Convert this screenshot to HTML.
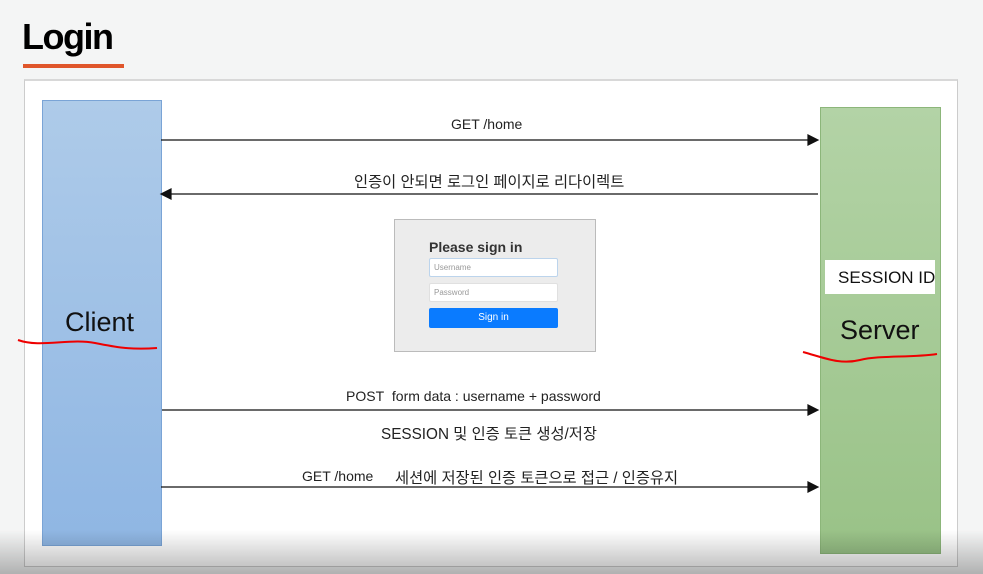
<!DOCTYPE html>
<html><head><meta charset="utf-8"><style>
body{margin:0;width:983px;height:574px;background:#f4f5f5;position:relative;overflow:hidden;font-family:"Liberation Sans","Noto Sans CJK KR",sans-serif}
.a{position:absolute}
.t{font-size:14px;color:#222;white-space:nowrap}
.k{font-size:15.3px}
</style></head><body>
<div class="a" style="left:22px;top:16px;font-size:36px;font-weight:bold;color:#000;letter-spacing:-1.5px">Login</div>
<div class="a" style="left:23px;top:64px;width:101px;height:4px;background:#e0562b"></div>
<div class="a" style="left:24px;top:79px;width:932px;height:485px;background:#fff;border:1px solid #ccc;border-top:2px solid #d8d8d8"></div>
<div class="a" style="left:42px;top:100px;width:118px;height:444px;background:linear-gradient(#aecbe9,#8fb6e3);border:1px solid #7aa4d6"></div>
<div class="a" style="left:820px;top:107px;width:119px;height:445px;background:linear-gradient(#b3d3a6,#99c287);border:1px solid #8cb67a"></div>
<div class="a" style="left:65px;top:307px;font-size:27px;color:#111">Client</div>
<div class="a" style="left:840px;top:315px;font-size:27px;color:#111">Server</div>
<div class="a" style="left:825px;top:260px;width:110px;height:34px;background:#fff"></div>
<div class="a" style="left:838px;top:268px;font-size:17px;color:#111">SESSION ID</div>
<svg class="a" style="left:0;top:0" width="983" height="574">
<g stroke="#111" stroke-width="1.2" fill="#111">
<line x1="161" y1="140" x2="810" y2="140"/><polygon points="818,140 808,135 808,145"/>
<line x1="170" y1="194" x2="818" y2="194"/><polygon points="161,194 171,189 171,199"/>
<line x1="162" y1="410" x2="810" y2="410"/><polygon points="818,410 808,405 808,415"/>
<line x1="161" y1="487" x2="810" y2="487"/><polygon points="818,487 808,482 808,492"/>
</g>
<path d="M18,340 C40,348 70,338 95,343 C115,347 130,350 157,348" stroke="#e00" stroke-width="2" fill="none"/>
<path d="M803,352 C825,358 840,365 860,360 C880,355 910,358 937,354" stroke="#e00" stroke-width="2" fill="none"/>
</svg>
<div class="a t" style="left:451px;top:116px">GET /home</div>
<div class="a t k" style="left:354px;top:170px">인증이 안되면 로그인 페이지로 리다이렉트</div>
<div class="a t" style="left:346px;top:388px">POST&nbsp; form data : username + password</div>
<div class="a t k" style="left:381px;top:422px">SESSION 및 인증 토큰 생성/저장</div>
<div class="a t" style="left:302px;top:468px">GET /home</div>
<div class="a t k" style="left:395px;top:466px">세션에 저장된 인증 토큰으로 접근 / 인증유지</div>
<div class="a" style="left:394px;top:219px;width:200px;height:131px;background:#ececec;border:1px solid #bbb"></div>
<div class="a" style="left:429px;top:239px;font-size:14px;font-weight:bold;color:#333">Please sign in</div>
<div class="a" style="left:429px;top:258px;width:127px;height:17px;background:#fff;border:1px solid #bcd4ec;border-radius:2px;font-size:8px;color:#999;line-height:17px;text-indent:4px">Username</div>
<div class="a" style="left:429px;top:283px;width:127px;height:17px;background:#fff;border:1px solid #e0e0e0;border-radius:2px;font-size:8px;color:#999;line-height:17px;text-indent:4px">Password</div>
<div class="a" style="left:429px;top:308px;width:129px;height:20px;background:#0a7bff;border-radius:2px;font-size:10px;color:#fff;line-height:20px;text-align:center">Sign in</div>
<div class="a" style="left:0;top:530px;width:983px;height:44px;background:linear-gradient(rgba(0,0,0,0),rgba(0,0,0,0.28))"></div>
</body></html>
